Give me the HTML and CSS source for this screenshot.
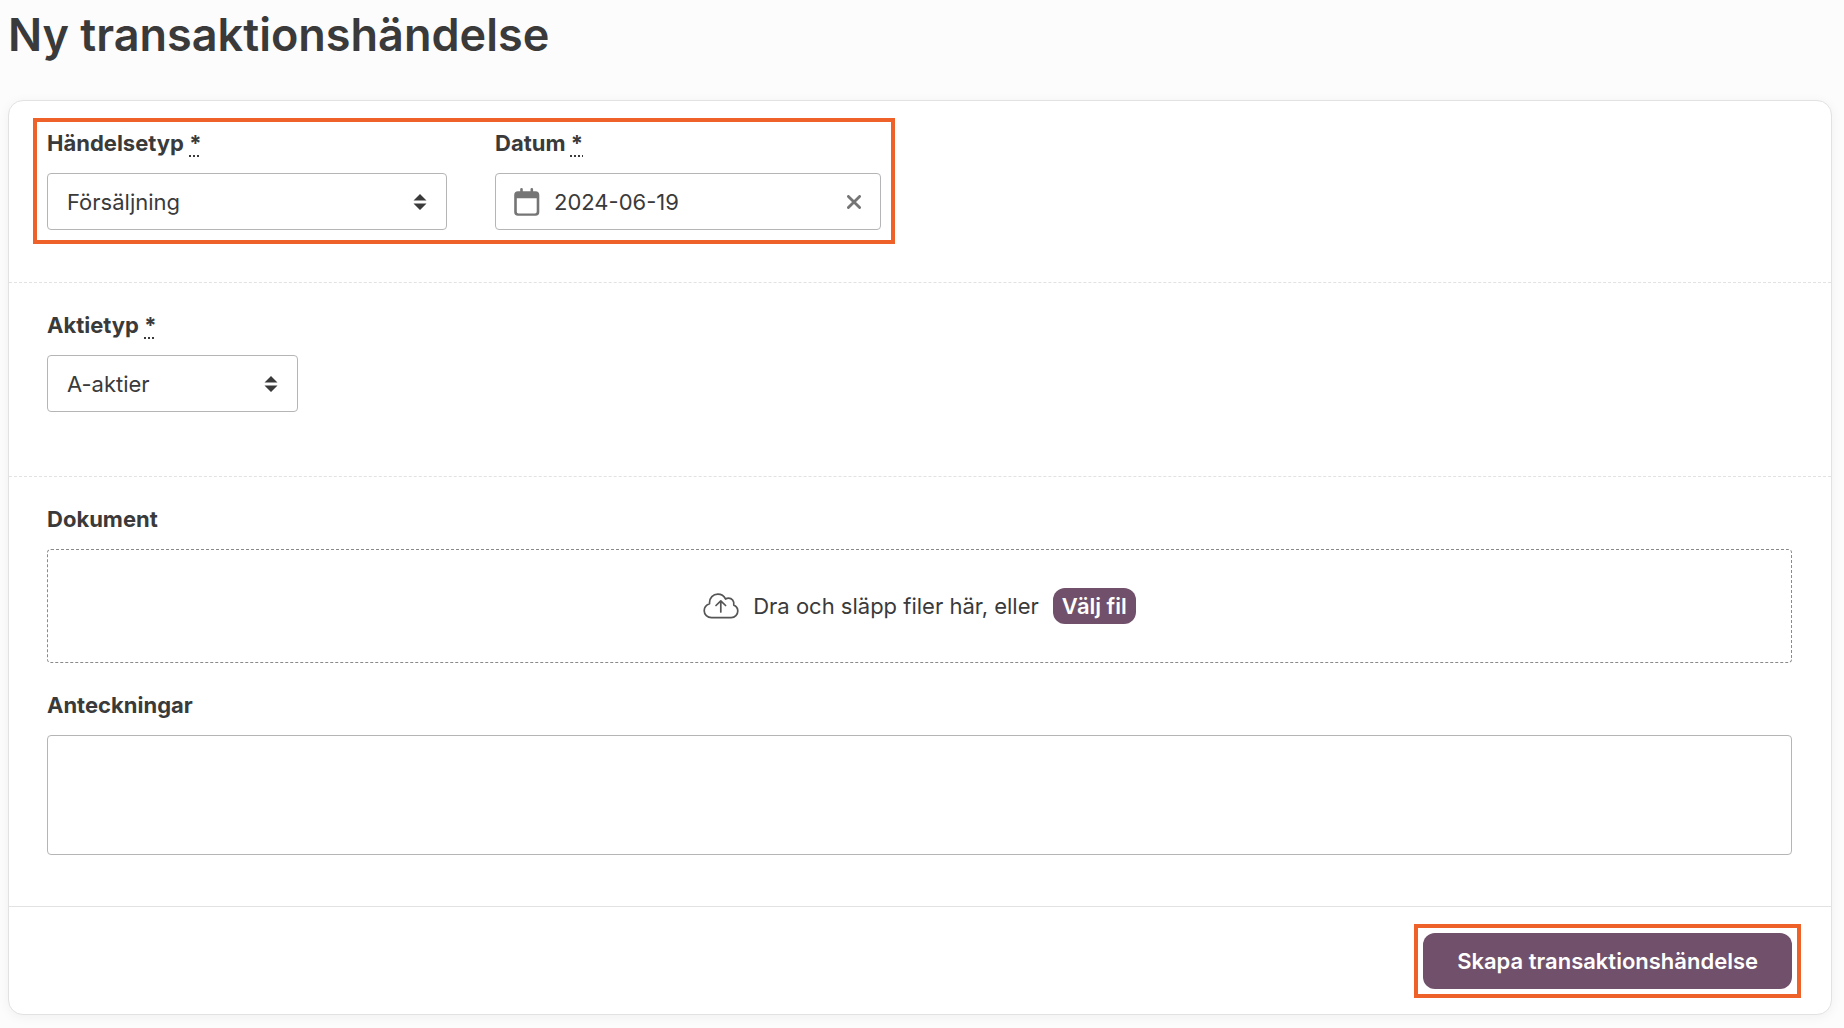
FILE: index.html
```html
<!DOCTYPE html>
<html lang="sv">
<head>
    <meta charset="UTF-8">
    <meta name="viewport" content="width=device-width, initial-scale=1.0">
    <title>Ny transaktionshändelse</title>
    <link rel="stylesheet" href="styles.css">
</head>
<body>

<h1>Ny transaktionshändelse</h1>

<form class="card">
    <!-- Event type and date -->
    <div class="section section-event">
        <div class="field-row highlight">
            <div class="field field-type">
                <label for="eventType">Händelsetyp <abbr>*</abbr></label>
                <select id="eventType" class="control" required>
                    <option>Försäljning</option>
                </select>
            </div>
            <div class="field field-date">
                <label for="date">Datum <abbr>*</abbr></label>
                <div class="control date-control">
                    <svg class="calendar-icon" width="26" height="28" viewBox="0 0 26 28" aria-hidden="true">
                        <path d="M7.5 1.300v4M17.800 1.300v4" stroke="#757575" stroke-width="2.600" stroke-linecap="round"/>
                        <path fill="#757575" fill-rule="evenodd" d="M4 3.200h17.500a3.800 3.800 0 0 1 3.800 3.800v17a3.800 3.800 0 0 1-3.800 3.800H4A3.800 3.800 0 0 1 .2 24V7A3.800 3.800 0 0 1 4 3.200zM2.800 10.200v13.600a1.700 1.700 0 0 0 1.700 1.700H21a1.700 1.700 0 0 0 1.700-1.700V10.200z"/>
                    </svg>
                    <input type="text" id="date" value="2024-06-19" required>
                    <button type="button" class="clear-button" aria-label="Rensa datum">
                        <svg width="14" height="14" viewBox="0 0 14 14" aria-hidden="true">
                            <path d="M1.400 1.400l11.200 11.200M12.600 1.400L1.400 12.600" stroke="#757575" stroke-width="2.800" stroke-linecap="round"/>
                        </svg>
                    </button>
                </div>
            </div>
        </div>
    </div>

    <!-- Share class -->
    <div class="section section-share">
        <div class="field field-share">
            <label for="shareType">Aktietyp <abbr>*</abbr></label>
            <select id="shareType" class="control" required>
                <option>A-aktier</option>
            </select>
        </div>
    </div>

    <!-- Documents and notes -->
    <div class="section section-notes">
        <div class="field">
            <span class="label">Dokument</span>
            <div class="dropzone">
                <svg width="36" height="26" viewBox="0 0 36 26" fill="none" stroke="#555" stroke-width="1.700" stroke-linecap="round" stroke-linejoin="round" aria-hidden="true">
                    <path d="M8.500 24.600h19.700c3.800 0 6.600-3 6.600-6.500 0-2.700-1.600-5-4-6 .6-4.200-2-7-5.200-7-1.200 0-2.200.3-3 .9C21 2.900 18 1.200 14.800 1.200 10 1.200 6.500 4.800 6.500 9.800v1C3.500 11.900 1.200 14.500 1.200 17.700c0 3.900 3.200 6.900 7.300 6.900z"/>
                    <path d="M17.800 19V8.200M13 12.500l4.800-4.700 4.800 4.700"/>
                </svg>
                <span>Dra och släpp filer här, eller</span>
                <button type="button" class="button button-small">Välj fil</button>
            </div>
        </div>
        <div class="field">
            <label for="notes">Anteckningar</label>
            <textarea id="notes"></textarea>
        </div>
    </div>

    <div class="card-footer">
        <div class="highlight highlight-tight">
            <button type="submit" class="button button-submit">Skapa transaktionshändelse</button>
        </div>
    </div>
</form>

</body>
</html>
```
FILE: styles.css
```css
* {
    box-sizing: border-box;
}
body {
    margin: 0;
    padding: 8px 12px 12px 8px;
    font-family: Inter, sans-serif;
    font-size: 22px;
    line-height: 28px;
    color: #3a3a3a;
    background-color: #fcfcfc;
}
h1 {
    margin: 0 0 38px;
    font-size: 45px;
    line-height: 54px;
    font-weight: 600;
}
.card {
    background-color: #fff;
    border: 1px solid #e2e2e2;
    border-radius: 15px;
    box-shadow: 0 2px 12px rgba(0, 0, 0, 0.05);
}
.section {
    padding: 31px 39px 51px 38px;
}
.section-event,
.section-share {
    border-bottom: 1px dashed #e2e2e2;
}
.section-event {
    padding-bottom: 52px;
}
.section-share {
    padding-bottom: 64px;
}
.section-notes {
    display: flex;
    flex-direction: column;
    gap: 31px;
    border-bottom: 1px solid #e2e2e2;
}
.field-row {
    display: flex;
    gap: 48px;
    width: fit-content;
}
.field {
    display: flex;
    flex-direction: column;
    gap: 19px;
}
.field-type {
    width: 400px;
}
.field-date {
    width: 386px;
}
.field-share {
    width: 251px;
}
label,
.label {
    line-height: 22px;
    font-weight: 700;
}
abbr {
    text-decoration: underline dotted 2px;
    text-underline-offset: 4px;
}
input,
select,
textarea,
button {
    font: inherit;
    color: inherit;
}
.control,
textarea {
    width: 100%;
    background-color: #fff;
    border: 1px solid #b5b5b5;
    border-radius: 4px;
}
.control {
    height: 57px;
    padding: 0 19px;
}
select.control {
    appearance: none;
    background-image: url("data:image/svg+xml,%3Csvg xmlns='http://www.w3.org/2000/svg' width='14' height='16' viewBox='0 0 14 16'%3E%3Cpath fill='%233a3a3a' d='M7 0l6.500 6.600h-13zM7 16L.5 9.400h13z'/%3E%3C/svg%3E");
    background-repeat: no-repeat;
    background-position: right 19px center;
}
.date-control {
    display: flex;
    align-items: center;
    padding: 0 19px 0 18px;
}
.date-control input {
    flex: 1;
    min-width: 0;
    margin-left: 14px;
    padding: 0;
    border: 0;
    background: none;
}
.clear-button {
    display: flex;
    padding: 0;
    border: 0;
    background: none;
    cursor: pointer;
}
.dropzone {
    display: flex;
    align-items: center;
    justify-content: center;
    height: 114px;
    gap: 14px;
    border: 1px dashed #8a8a8a;
    border-radius: 4px;
}
textarea {
    height: 120px;
    padding: 13px 20px;
    resize: none;
}
.button {
    display: block;
    border: 0;
    border-radius: 12px;
    font-weight: 600;
    color: #fff;
    background-color: #70506a;
    cursor: pointer;
}
.button-small {
    height: 36px;
    padding: 0 9px;
}
.card-footer {
    display: flex;
    justify-content: flex-end;
    padding: 26px 39px 25px;
}
.button-submit {
    height: 56px;
    padding: 0 34px;
}
.highlight {
    outline: 4px solid #ee622a;
    outline-offset: 10px;
}
.highlight-tight {
    outline-offset: 5px;
}
```
